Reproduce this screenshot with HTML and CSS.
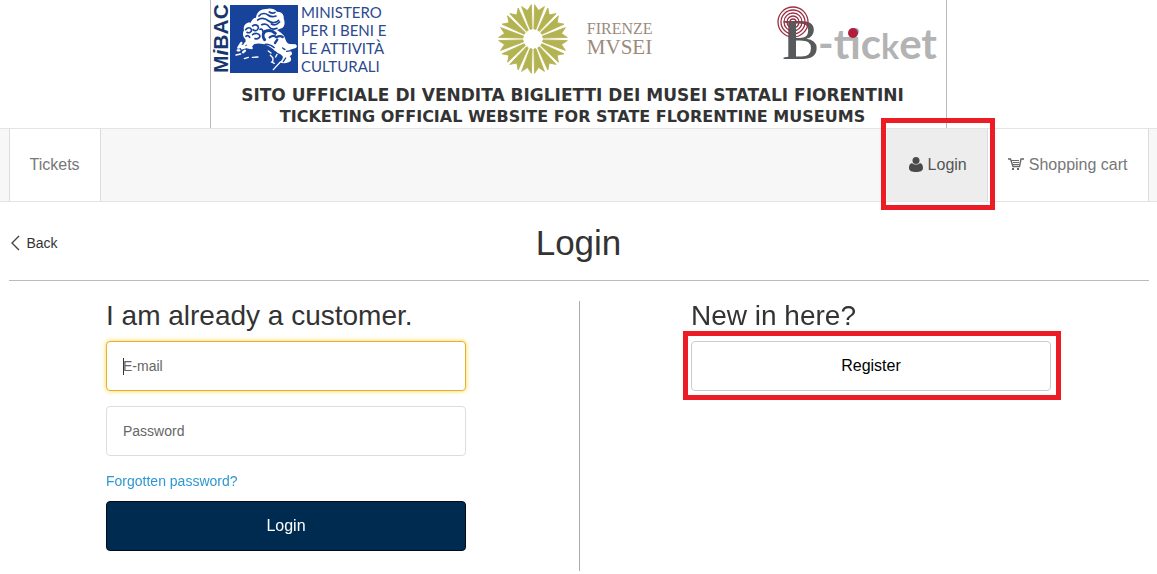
FILE: index.html
```html
<!DOCTYPE html>
<html lang="en">
<head>
<meta charset="utf-8">
<title>Login</title>
<meta name="viewport" content="width=device-width, initial-scale=1">
<link rel="stylesheet" href="styles.css">
</head>
<body>
<header class="banner">
  <div class="logos">
    <div class="logo mibac">
      <svg width="86" height="68" viewBox="0 0 86 68" aria-hidden="true">
        <text class="mibac-name" transform="translate(16 68) rotate(-90)">M<tspan font-style="italic">i</tspan>BAC</text>
        <rect x="18" width="68" height="68" fill="#17439b"/>
        <g transform="translate(-2 -3) scale(.3333)" fill="none" stroke="#fff" stroke-linecap="round" stroke-linejoin="round">
          <path fill="#fff" stroke="none" d="M201 84c8 6 20 12 24 24 4 12 6 16 14 18l18 1c6 4 4 10-2 12l-15 4c4 6 8 10 5 15l-6 5c8 8 4 16-3 18-10 4-20 4-26 0 4-6 10-10 8-18-6-8-12-10-20-10-12-2-24-14-37-15-12 0-24 2-34-3-8 0-14-2-18-6l-3-18c-8-6-9-18-4-26-4-14 8-26 20-23 4-10 10-15 16-15 2-16 14-26 30-26 14-4 26 0 33 8 14-1 22 10 20 20 4 10 4 22-3 28z"/>
          <g stroke="#17439b" stroke-width="5">
            <path d="M147 42c8-10 20-9 27-3s16 6 24 3M143 54c12-8 24-4 33 3s22 6 30-2M178 30c6 4 12 5 17 1M184 66c9 5 19 0 25-6M155 68c8-4 18-1 22 6s14 9 24 5"/>
            <path d="M107 83c6-8 14-7 17-1s-6 13-13 9M128 72c8-7 18-2 17 6s-11 10-15 5M128 98c8-6 18-4 21 2s-5 12-14 10M108 103c4-4 9-2 11 3M150 82c6-2 9 2 9 8"/>
            <path stroke-width="9" d="M165 88c-7 7-7 18-1 25M169 87c9-3 19 0 27 7"/>
            <path stroke-width="7" d="M179 106c7-5 14-7 20 0 7-4 13-5 19-1M202 113l-7 10"/>
            <path stroke-width="4" d="M165 127c12-1 20 3 28 10M230 148l14-2M227 168l-7 11M218 138l7 5"/>
          </g>
          <path fill="#17439b" stroke="none" d="M132 127c22-7 46 4 62 19 14 7 16 16 12 24l-10 8 5 32h-92l-5-24 13-7-4-8 13-18-8-9z"/>
          <path stroke-width="7" d="M94 123l-9 14 12-5M108 122l-12 17 14-4M121 125l-8 11 12 2M88 145h-5M105 146l-6 5"/>
          <path stroke-width="4" d="M78 159l14-3M103 170l12-4M127 166l17-1M175 147l8 6M181 160l8 8-1 14M201 157l-4 8M184 180l9 4M190 203l21-23"/>
        </g>
      </svg>
      <p class="ministry">MINISTERO<br>PER I BENI E<br>LE ATTIVITÀ<br>CULTURALI</p>
    </div>
    <div class="logo firenze">
      <svg width="70" height="70" viewBox="-35 -34 70 70" aria-hidden="true">
        <defs><path id="petal" d="M-1-10-5-34 0-29 5-34 1-10z"/></defs>
        <g fill="#b4b352" stroke="#b4b352" stroke-width=".8">
          <use href="#petal" transform="rotate(11)"/><use href="#petal" transform="rotate(34)"/>
          <use href="#petal" transform="rotate(56)"/><use href="#petal" transform="rotate(79)"/>
          <use href="#petal" transform="rotate(101)"/><use href="#petal" transform="rotate(124)"/>
          <use href="#petal" transform="rotate(146)"/><use href="#petal" transform="rotate(169)"/>
          <use href="#petal" transform="rotate(191)"/><use href="#petal" transform="rotate(214)"/>
          <use href="#petal" transform="rotate(236)"/><use href="#petal" transform="rotate(259)"/>
          <use href="#petal" transform="rotate(281)"/><use href="#petal" transform="rotate(304)"/>
          <use href="#petal" transform="rotate(326)"/><use href="#petal" transform="rotate(349)"/>
        </g>
      </svg>
      <p class="firenze-name"><span>FIRENZE</span><span class="musei">MVSEI</span></p>
    </div>
    <div class="logo">
      <svg width="162" height="60" viewBox="0 0 162 60" role="img" aria-label="B-ticket">
        <text class="ticket-b" x="6" y="54">B</text>
        <g fill="none" stroke="#9b3043" stroke-width="1.3">
          <circle cx="17" cy="17" r="15"/><circle cx="17" cy="17" r="12"/><circle cx="17" cy="17" r="9"/>
          <circle cx="17" cy="17" r="6"/><circle cx="17" cy="17" r="3"/>
        </g>
        <path fill="#58595b" d="M14 17h6v36h-6z"/>
        <text class="ticket-word" x="42" y="54">-tic<tspan class="ticket-k">k</tspan>et</text>
        <circle cx="77" cy="28" r="5" fill="#b01c3c"/>
      </svg>
    </div>
  </div>
  <div class="tagline">
    <p>SITO UFFICIALE DI VENDITA BIGLIETTI DEI MUSEI STATALI FIORENTINI</p>
    <p class="tagline-en">TICKETING OFFICIAL WEBSITE FOR STATE FLORENTINE MUSEUMS</p>
  </div>
</header>

<nav class="nav">
  <div class="nav-inner">
    <a class="tab tab-tickets" href="#">Tickets</a>
    <a class="tab tab-login highlight" href="#">
      <svg width="14" height="16" viewBox="0 0 14 16" fill="#4a4a4a" aria-hidden="true"><circle cx="7" cy="3.500" r="3.500"/><path d="M3 6C0 7 0 10 0 11c0 3 3 4 7 4s7-1 7-4c0-1 0-4-3-5-2 2-6 2-8 0z"/></svg>
      Login
    </a>
    <a class="tab tab-cart" href="#">
      <svg width="16" height="16" viewBox="0 0 16 16" fill="none" stroke="#666" aria-hidden="true"><path stroke-width="1.4" d="M0 2h2.500L5 9.500h6.500L13 2h3"/><path stroke-width="1.2" d="M3 3.500h8M5 5.500h6M5 7.500h6"/><path fill="#666" stroke="none" d="M4 11h2v2H4zM9 11h2v2H9z"/></svg>
      Shopping cart
    </a>
  </div>
</nav>

<main class="content">
  <div class="title-row">
    <a class="back" href="#">
      <svg width="9" height="14" viewBox="0 0 9 14" fill="none" stroke="#444" stroke-width="1.4" aria-hidden="true"><path d="M8 0 1 7l7 7"/></svg>
      Back
    </a>
    <h1 class="title">Login</h1>
  </div>
  <div class="columns">
    <section class="column column-left">
      <form class="panel">
        <h2 class="heading">I am already a customer.</h2>
        <input class="field" type="email" placeholder="E-mail" aria-label="E-mail" autofocus>
        <input class="field" type="password" placeholder="Password" aria-label="Password">
        <a class="forgot" href="#">Forgotten password?</a>
        <button class="button button-primary" type="submit">Login</button>
      </form>
    </section>
    <section class="column column-right">
      <div class="panel">
        <h2 class="heading">New in here?</h2>
        <div class="register highlight"><button class="button" type="button">Register</button></div>
      </div>
    </section>
  </div>
</main>
</body>
</html>
```
FILE: styles.css
```css
* { box-sizing: border-box; }
body {
  margin: 0;
  background: #fff;
  color: #333;
  font-family: "Liberation Sans", Arial, sans-serif;
  font-size: 14px;
}
p, h1, h2 { margin: 0; font-weight: 400; }
a { text-decoration: none; color: inherit; }
svg { flex: none; display: block; overflow: visible; }

.banner {
  max-width: 737px;
  margin: 0 auto;
  border: solid #bbb;
  border-width: 0 1px;
}
.logos {
  display: flex;
  justify-content: space-between;
  align-items: flex-start;
  height: 84px;
  padding: 5px 8px 0 1px;
}
.logo { display: flex; }
.mibac { gap: 3px; }
.mibac-name { font: bold 21px "Liberation Sans", sans-serif; fill: #17366f; }
.ministry {
  margin-top: -2px;
  color: #2b4a8e;
  font: 15px/18px Lato, sans-serif;
  white-space: nowrap;
}
.firenze { gap: 19px; padding-right: 12px; }
.firenze-name {
  display: flex;
  flex-direction: column;
  padding-top: 15px;
  color: #9b8a7c;
  font: 16px/18px "Liberation Serif", serif;
}
.musei { font-size: 21px; }
.ticket-b { font: 56px "Liberation Serif", serif; fill: #58595b; }
.ticket-word { font: bold 42px Lato, sans-serif; fill: #b3b3b3; }
.ticket-k { font-size: 34px; }
.tagline {
  padding-right: 12px;
  font-family: "DejaVu Sans", Verdana, sans-serif;
  font-size: 17px;
  line-height: 22px;
  text-align: center;
  white-space: nowrap;
}
.tagline p { font-weight: 700; }
.tagline-en { font-size: 16px; }

.nav {
  border: solid #e4e4e4;
  border-width: 1px 0;
  background: #f7f7f7;
}
.nav-inner {
  display: flex;
  max-width: 1140px;
  margin: 0 auto;
}
.tab {
  display: flex;
  align-items: center;
  gap: 5px;
  height: 72px;
  padding: 0 20px;
  border-right: 1px solid #dcdcdc;
  background: #fff;
  color: #777;
  font-size: 16px;
}
.tab-tickets { border-left: 1px solid #dcdcdc; margin-right: auto; }
.tab-login { padding-left: 22px; background: #ededed; color: #555; }

.highlight { position: relative; }
.highlight::after {
  content: "";
  position: absolute;
  inset: -10px -10px -9px -8px;
  border: 5px solid #ed1c24;
  pointer-events: none;
}
.tab-login::after { inset: -11px -8px -9px -6px; }

.content {
  max-width: 1140px;
  margin: 0 auto;
}
.title-row {
  display: grid;
  grid-template-columns: 1fr auto 1fr;
  align-items: center;
  height: 79px;
  padding: 3px 2px 0;
  border-bottom: 1px solid #bbb;
}
.back { display: flex; align-items: center; gap: 7px; }
.title { font-size: 35px; line-height: 40px; }

.columns {
  display: grid;
  grid-template-columns: 1fr 1fr;
  margin-top: 20px;
}
.column { display: flex; justify-content: center; padding-bottom: 20px; }
.column-left { padding-right: 15px; }
.column-right { padding-left: 14px; border-left: 1px solid #aaa; }
.panel {
  display: flex;
  flex-direction: column;
  width: 100%;
  max-width: 360px;
}
.heading { font-size: 28px; line-height: 30px; margin-bottom: 10px; }
.field {
  height: 50px;
  margin: 0 0 15px;
  padding: 0 16px;
  border: 1px solid #ddd;
  border-radius: 4px;
  background: #fff;
  color: #333;
  font: inherit;
}
.field::placeholder { color: #666; opacity: 1; }
.field:focus {
  outline: none;
  border-color: #e0b52c;
  box-shadow: 0 0 5px #ffd34d;
}
.field:focus:placeholder-shown {
  background: linear-gradient(#333, #333) 16px center / 1px 17px no-repeat #fff;
}
.forgot {
  align-self: flex-start;
  margin-bottom: 10px;
  color: #2e97d1;
  line-height: 20px;
}
.button {
  width: 100%;
  height: 50px;
  padding: 0;
  border: 1px solid #ccc;
  border-radius: 4px;
  background: #fff;
  color: #000;
  font: 16px "Liberation Sans", Arial, sans-serif;
}
.button-primary { border-color: #000a18; background: #002b50; color: #fff; }
```
